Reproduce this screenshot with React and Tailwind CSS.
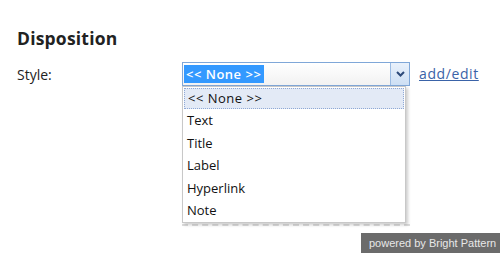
import React from "react";

export default function App() {
  const items = ["Text", "Title", "Label", "Hyperlink", "Note"];
  return (
    <div className="relative w-[500px] h-[253px] bg-white overflow-hidden" style={{ fontFamily: '"Open Sans", "Noto Sans", sans-serif' }}>
      <div className="pt-[27px] pl-[17px]">
        <h1 className="text-[17.5px] font-bold text-[#222] leading-[22px] tracking-[0.2px]">Disposition</h1>
        <div className="flex mt-[13px]">
          <div className="w-[165px] pt-[3px] text-[14px] text-[#222] leading-[19px]">Style:</div>
          <div className="flex flex-col">
            <div className="flex items-start">
              <div className="w-[228px]">
                <div className="flex h-[24px] border border-[#7fa7d8] bg-gradient-to-b from-white to-[#f2f2f2]">
                  <div className="flex-1 flex items-center pl-[1px]">
                    <span className="bg-[#3399ff] text-white text-[13px] leading-[18px] px-[2px] w-[80px] font-semibold tracking-[0.5px]">&lt;&lt; None &gt;&gt;</span>
                  </div>
                  <div className="w-[19px] border-l border-[#9bbbe3] bg-gradient-to-b from-[#e9f1fb] to-[#cddff4] flex items-center justify-center">
                    <svg width="9" height="6" viewBox="0 0 9 6"><path d="M1 1 L4.5 4.5 L8 1" stroke="#2d4a7a" strokeWidth="2" fill="none" /></svg>
                  </div>
                </div>
                <div className="relative w-[224px] bg-white border border-[#c8c8c8] shadow-[2px_2px_3px_rgba(0,0,0,0.2)] pt-[1px]">
                  <div className="mx-[1px] h-[21px] border border-dotted border-[#8fa9d6] bg-[#e3eaf6] text-[13px] text-[#111] leading-[19px] pl-[3px] tracking-[0.5px]">&lt;&lt; None &gt;&gt;</div>
                  {items.map((t) => (
                    <div key={t} className="h-[22.5px] text-[13px] text-[#111] leading-[22px] pl-[4px]">{t}</div>
                  ))}
                </div>
                <div className="w-[228px] mt-[1px] border-t-2 border-dashed border-[#dedede]" />
              </div>
              <a className="ml-[9px] mt-[2px] text-[14px] text-[#3a63a8] underline tracking-[0.6px] leading-[20px]">add/edit</a>
            </div>
          </div>
        </div>
      </div>
      <div className="absolute right-0 bottom-0 w-[139px] h-[20px] bg-[#6b6b6b] text-[#e8e8e8] text-[11px] leading-[20px] pl-[8px]" style={{ fontFamily: '"Liberation Sans", Arial, sans-serif' }}>powered by Bright Pattern</div>
    </div>
  );
}
